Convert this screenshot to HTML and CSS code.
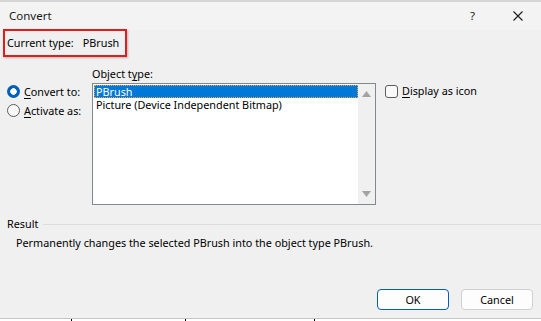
FILE: index.html
```html
<!DOCTYPE html>
<html lang="en">
<head>
  <meta charset="UTF-8" />
  <title>Convert</title>
  <link rel="stylesheet" href="styles.css">
</head>
<body>

  <div class="backdrop-top"></div>

  <div class="dialog">
    <div class="titlebar">
      <span class="title">Convert</span>
      <div class="caption-btns">
        <span class="help">?</span>
        <svg class="close" width="10" height="10" viewBox="0 0 10 10">
          <path d="M0.5 0.5 L9.5 9.5 M9.5 0.5 L0.5 9.5" stroke="#1a1a1a" stroke-width="1.1" fill="none"/>
        </svg>
      </div>
    </div>

    <div class="content">
      <div class="current-type">
        <span>Current type:</span>
        <span>PBrush</span>
      </div>

      <div class="main-row">
        <div class="radios">
          <div class="radio-row">
            <span class="radio checked"></span>
            <span><u>C</u>onvert to:</span>
          </div>
          <div class="radio-row">
            <span class="radio"></span>
            <span><u>A</u>ctivate as:</span>
          </div>
        </div>

        <div class="object-type">
          <div class="field-label">Object t<u>y</u>pe:</div>
          <div class="listbox">
            <div class="items">
              <div class="item selected">PBrush</div>
              <div class="item">Picture (Device Independent Bitmap)</div>
            </div>
            <div class="scrollbar">
              <svg width="9" height="6" viewBox="0 0 9 6"><path d="M0 6 L4.5 0 L9 6 Z" fill="#a3a3a3"/></svg>
              <svg width="9" height="6" viewBox="0 0 9 6"><path d="M0 0 L4.5 6 L9 0 Z" fill="#a3a3a3"/></svg>
            </div>
          </div>
        </div>

        <div class="check-row">
          <span class="checkbox"></span>
          <span><u>D</u>isplay as icon</span>
        </div>
      </div>

      <div class="result">
        <div class="result-head">
          <span>Result</span>
          <span class="rule"></span>
        </div>
        <p class="result-text">Permanently changes the selected PBrush into the object type PBrush.</p>
      </div>

      <div class="buttons">
        <button class="btn default">OK</button>
        <button class="btn">Cancel</button>
      </div>
    </div>
  </div>

  <div class="backdrop-bottom">
    <span class="tick t1"></span>
    <span class="tick t2"></span>
    <span class="tick t3"></span>
  </div>

</body>
</html>
```

FILE: styles.css
```css
:root {
  --dialog-bg: #f0f0f0;
  --title-bg: #f3f3f3;
  --text: #000000;
  --accent: #005fb8;
  --select: #0078d7;
  --border: #828790;
}

* {
  box-sizing: border-box;
  margin: 0;
  padding: 0;
}

body {
  width: 541px;
  height: 321px;
  overflow: hidden;
  font-family: "Noto Sans", "Liberation Sans", sans-serif;
  font-size: 10.8px;
  line-height: 16px;
  color: var(--text);
  background: #ffffff;
  white-space: nowrap;
}

u {
  text-underline-offset: 2px;
}

.backdrop-top {
  height: 2px;
  background: #d6d6d6;
}

.dialog {
  height: 316px;
  display: flex;
  flex-direction: column;
  background: var(--dialog-bg);
}

.titlebar {
  height: 28px;
  display: flex;
  align-items: center;
  justify-content: space-between;
  padding-left: 9px;
  background: var(--title-bg);
  font-size: 11.5px;
  color: #1a1a1a;
}

.caption-btns {
  display: flex;
  align-items: center;
  gap: 38px;
  padding-right: 18px;
}

.content {
  flex: 1;
  display: flex;
  flex-direction: column;
}

.current-type {
  width: 124px;
  height: 28px;
  margin: -1px 0 0 3px;
  border: 2px solid #e41b1b;
  display: flex;
  align-items: center;
  gap: 9px;
  padding-left: 2px;
  box-shadow: 1px 1px 2px rgba(0, 0, 0, 0.25);
}

.main-row {
  display: flex;
  margin-top: 9px;
}

.radios {
  width: 92px;
  padding: 16px 0 0 7px;
}

.radio-row {
  height: 19px;
  display: flex;
  align-items: center;
  gap: 4px;
}

.radio {
  width: 13px;
  height: 13px;
  border-radius: 50%;
  border: 1px solid #5c5c5c;
  background: #f9f9f9;
}

.radio.checked {
  border: none;
  background: radial-gradient(circle, #ffffff 0 3px, var(--accent) 3.5px);
}

.object-type {
  width: 284px;
}

.field-label {
  height: 17px;
}

.listbox {
  height: 122px;
  border: 1px solid var(--border);
  background: #ffffff;
  display: flex;
}

.items {
  flex: 1;
  padding: 1px 0 0 1px;
}

.item {
  height: 13px;
  line-height: 13px;
  padding-left: 2px;
}

.item.selected {
  background: var(--select);
  color: #ffffff;
  outline: 1px dotted #f5a442;
  outline-offset: -1px;
}

.scrollbar {
  width: 17px;
  background: #f0f0f0;
  display: flex;
  flex-direction: column;
  justify-content: space-between;
  align-items: center;
  padding: 7px 0 7px;
}

.check-row {
  display: flex;
  align-items: center;
  gap: 4px;
  height: 16px;
  margin: 17px 0 0 9px;
}

.checkbox {
  width: 13px;
  height: 13px;
  border: 1px solid #5c5c5c;
  border-radius: 3px;
  background: #f9f9f9;
}

.result {
  margin-top: 11px;
}

.result-head {
  display: flex;
  align-items: center;
  gap: 5px;
  padding-left: 7px;
}

.rule {
  flex: 1;
  height: 1px;
  background: #dcdcdc;
}

.result-text {
  margin: 3px 0 0 16px;
}

.buttons {
  margin-top: auto;
  display: flex;
  justify-content: flex-end;
  gap: 12px;
  padding: 0 8px 8px 0;
}

.btn {
  width: 72px;
  height: 21px;
  font-family: inherit;
  font-size: 10.8px;
  color: var(--text);
  background: #fdfdfd;
  border: 1px solid #d0d0d0;
  border-radius: 4px;
}

.btn.default {
  border-color: var(--accent);
}

.backdrop-bottom {
  height: 3px;
  border-top: 1px solid #c4c4c4;
  background: #ffffff;
  display: flex;
}

.tick {
  width: 1px;
  height: 2px;
  background: #000000;
}

.t1 {
  margin-left: 71px;
}

.t2 {
  margin-left: 113px;
}

.t3 {
  margin-left: 128px;
}
```
